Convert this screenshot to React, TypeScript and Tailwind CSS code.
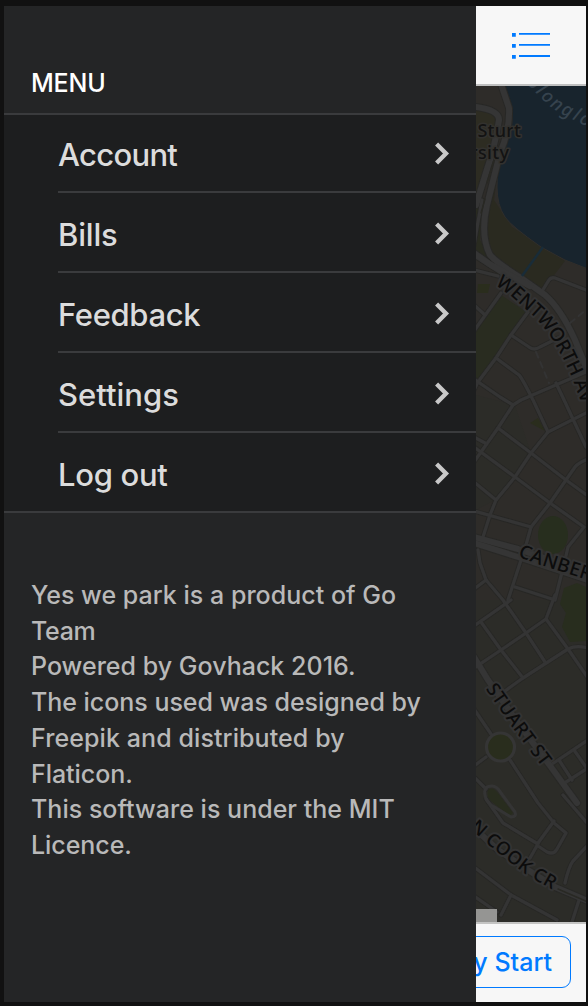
const menuItems = [
  { label: "Account", className: "h-[78px] tracking-[-0.7px]" },
  { label: "Bills", className: "h-[80px] tracking-[-0.2px]" },
  { label: "Feedback", className: "h-[80px] tracking-[-0.35px]" },
  { label: "Settings", className: "h-[80px] tracking-[0px]" },
  { label: "Log out", className: "h-[80px] tracking-[-0.3px]" },
];

const aboutLines = [
  { text: "Yes we park is a product of Go", className: "tracking-[0.02px]" },
  { text: "Team", className: "tracking-[-0.3px]" },
  { text: "Powered by Govhack 2016.", className: "tracking-[0.02px]" },
  { text: "The icons used was designed by", className: "tracking-[-0.03px]" },
  { text: "Freepik and distributed by", className: "tracking-[0.09px]" },
  { text: "Flaticon.", className: "tracking-[-0.05px]" },
  { text: "This software is under the MIT", className: "tracking-[0.02px]" },
  { text: "Licence.", className: "tracking-[-0.05px]" },
];

const minorRoads = [
  "M476 257L501 273", "M474 270L498 276", "M482 200L478 222L474 245",
  "M541 293L549 280Q551 277 555 278L586 290",
  "M528 312L511 335L496 358L478 382L474 390",
  "M501 293L474 331", "M474 305L485 315",
  "M511 335L529 347Q534 351 540 347L558 338",
  "M496 358L519 375Q522 378 533 400L548 432L586 413",
  "M474 379L500 397L513 405L521 400L586 372", "M556 383L565 402L586 447",
  "M548 432L531 453L515 477L496 500L490 515L483 537",
  "M513 405L498 428L481 452L474 462",
  "M498 428L531 453L566 480L588 496",
  "M474 447L515 477L550 503L584 527L568 547L565 560",
  "M474 437L485 443", "M474 482L496 500",
  "M588 459Q578 463 575 467L550 503L531 527L526 545",
  "M474 511L531 527",
  "M478 550L480 563L486 580L503 600L526 633L545 662",
  "M486 580L474 589", "M521 560L508 600", "M515 587L555 600L562 572",
  "M474 626L511 600", "M481 622L501 650L523 678",
  "M474 668L501 650L526 633L546 619L555 595",
  "M546 619L568 649L588 678", "M505 691L523 678L568 649Q576 645 588 648",
  "M474 709L491 734", "M486 757L474 766", "M510 760L538 803L554 823L566 833L557 849Q554 855 547 852L538 846",
  "M552 764L588 740", "M563 784L588 768", "M559 760L572 780", "M574 750L588 770",
  "M474 777L486 789", "M486 799L503 823L538 844L530 858",
  "M538 843L554 821", "M563 795L588 824",
  "M588 845L573 861Q569 866 565 883",
  "M474 867L511 895L557 920", "M511 895L501 915", "M474 896L497 912", "M579 900L572 922",
];

const majorRoads = [
  "M501 84L509 108Q510 130 500 153L487 205Q480 235 490 255Q497 263 521 278L545 295Q561 309 575 340L588 372",
  "M476 107Q499 110 499 120Q494 150 488 166L476 205",
  "M474 253L491 265L530 286",
  "M474 537L518 549L588 573",
  "M474 543L518 557L588 580",
  "M474 657L488 680L518 723L551 767L577 803",
  "M474 828L498 850L528 870L555 887L588 901",
];

function ListIcon() {
  return (
    <svg width="38" height="26" viewBox="0 0 38 26" fill="#007aff" className="block">
      <path d="M0 0h3.8v3.8H0zM0 11h3.8v3.8H0zM0 22h3.8v3.8H0z" />
      <path d="M7 0h31v1.8H7zM7 11h31v1.8H7zM7 22.1h31v1.8H7z" />
    </svg>
  );
}

function Chevron() {
  return (
    <svg width="16" height="24" viewBox="0 0 16 24" className="block">
      <path d="M2.6 3.1L12 12.5L2.6 21.9" fill="none" stroke="#c8c8c8" strokeWidth="4.3" />
    </svg>
  );
}

function MapLabel({ id, path, text, size, spacing }: {
  id: string;
  path: string;
  text: string;
  size: number;
  spacing: number;
}) {
  return (
    <>
      <path id={id} d={path} fill="none" />
      <text
        fontSize={size}
        letterSpacing={spacing}
        fontWeight="500"
        fill="#0c0c0c"
        stroke="#333333"
        strokeWidth="4"
        strokeLinejoin="round"
        paintOrder="stroke"
        dy={size * 0.36}
      >
        <textPath href={`#${id}`}>{text}</textPath>
      </text>
    </>
  );
}

function CityMap() {
  return (
    <svg
      width="110"
      height="836"
      viewBox="476 86 110 836"
      className="block overflow-hidden font-['Noto_Sans',sans-serif]"
    >
      <path d="M476 86h110v836H476z" fill="#2e2c29" />
      <path d="M476 395L515 405L531 453L495 500L476 510zM476 600H570L586 650V922H476z" fill="#2c2c28" />
      <path d="M476 110L497 115L490 170L476 205z" fill="#2d2c22" />
      <path d="M500 150L494 200L512 227L565 261L541 292L492 260L481 235L487 200z" fill="#2a2a20" />
      <path d="M476 205L482 200L480 240L500 272L476 255z" fill="#292b20" />
      <path d="M501 295L528 313L478 382H476V330z" fill="#292c20" />
      <path
        d="M503 84L511 105Q513 120 511 130L502 150Q497 165 497 187Q497 205 505 217Q511 226 541 247L565 260L588 269V84z"
        fill="#18242d"
        stroke="#302e2b"
        strokeWidth="1"
      />
      <path d="M530 423L538 418L545 431zM478 284L490 284L488 293H477z" fill="#2a2d1d" />
      <ellipse cx="553" cy="535" rx="15" ry="19" fill="#272e1e" />
      <path d="M560 604L564 588L577 583L588 588V641L570 642L562 627L566 613z" fill="#282d1e" />
      <path d="M488 790Q492 786 498 793L513 813L510 816L492 802Q486 797 488 790z" fill="#282c1e" />
      <g fill="none" strokeLinejoin="round" strokeLinecap="round">
        {minorRoads.map((d) => (
          <path key={d} d={d} stroke="#272725" strokeWidth="5" />
        ))}
        {majorRoads.map((d) => (
          <path key={d} d={d} stroke="#282826" strokeWidth="8" />
        ))}
        {minorRoads.map((d) => (
          <path key={d} d={d} stroke="#343434" strokeWidth="3.3" />
        ))}
        {majorRoads.map((d) => (
          <path key={d} d={d} stroke="#353535" strokeWidth="6" />
        ))}
        <path d="M485 795Q483 786 492 786Q497 786 501 793L515 812Q517 817 511 817L491 805Q486 801 485 795z" stroke="#343434" strokeWidth="3" />
        <path d="M536 352L549 383M570 323L586 310" stroke="#333" strokeWidth="2" strokeDasharray="6 5" />
        <path d="M558 889L588 902M494 160L487 183M485 199L481 213" stroke="#292924" strokeWidth="1.4" />
      </g>
      <path d="M543 247L522 276" stroke="#192c38" strokeWidth="2.5" />
      <circle cx="500.5" cy="747" r="14" fill="#292d1d" stroke="#353535" strokeWidth="3.2" />
      <path id="lake-name" d="M526 83L540 97Q552 110 568 117L602 134" fill="none" />
      <text fontSize="18.5" letterSpacing="2.2" fill="#36434e" fontStyle="italic" fontWeight="500">
        <textPath href="#lake-name">olonglo</textPath>
      </text>
      <g fontSize="18" fontWeight="500" fill="#131313" stroke="#32312e" strokeWidth="3" strokeLinejoin="round" paintOrder="stroke">
        <text x="477.5" y="137" textLength="43.5">Sturt</text>
        <text x="470" y="158.5" textLength="39">rsity</text>
      </g>
      <MapLabel id="wentworth" path="M499 279L518 293L538 311Q552 325 560 339L569 355L578 374L588 401L602 436" text="WENTWORTH AV" size={19} spacing={0.3} />
      <MapLabel id="canberra" path="M520 550L541 558L620 583" text="CANBER" size={19} spacing={0.3} />
      <MapLabel id="stuart" path="M491 685L518 724L561 781" text="STUART ST" size={18.5} spacing={0.35} />
      <MapLabel id="cook" path="M474 823L492 839L514 857L531 870L572 893" text="N COOK CR" size={18.5} spacing={0.3} />
      <path d="M476 909h21v13h-21z" fill="#959593" />
    </svg>
  );
}

export default function App() {
  return (
    <main className="flex h-[1006px] w-[588px] overflow-hidden bg-[#111111] pt-[6px] pr-[2px] pb-1 pl-1 font-['Inter',sans-serif] font-[450]">
      <aside className="w-[472px] shrink-0 bg-[#242526]">
        <header className="flex h-[109px] items-end border-b-2 border-[#3a3b3d] pb-[12px] pl-[27px]">
          <h1 className="text-[25px] leading-[36px] font-[450] tracking-[-0.2px] text-white">MENU</h1>
        </header>
        <nav className="border-b-2 border-[#3a3b3d] bg-[#1d1e1f] pl-[54px]">
          <ul className="-mb-[2px]">
            {menuItems.map((item) => (
              <li
                key={item.label}
                className={`flex items-end justify-between border-b-2 border-[#3a3b3d] pr-[26px] pb-[16px] ${item.className}`}
              >
                <span className="text-[31px] leading-[40px] text-[#dcdcdc]">{item.label}</span>
                <span className="pb-[10px]"><Chevron /></span>
              </li>
            ))}
          </ul>
        </nav>
        <section className="pt-[65px] pl-[27px] text-[25px] leading-[35.7px] text-[#b9b9b9]">
          {aboutLines.map((line) => (
            <p key={line.text} className={`whitespace-nowrap ${line.className}`}>{line.text}</p>
          ))}
        </section>
      </aside>
      <section className="flex w-[110px] shrink-0 flex-col overflow-hidden">
        <header className="flex h-[80px] shrink-0 items-start border-b-2 border-[#bfc0c0] bg-[#f7f7f7] pt-[27px] pl-[36px]">
          <ListIcon />
        </header>
        <CityMap />
        <footer className="flex h-[80px] shrink-0 items-start justify-end border-t-2 border-[#c4c4c3] bg-[#f7f7f7] pt-[12px] pr-[15px]">
          <button className="h-[52px] shrink-0 rounded-[9px] border border-[#007aff] pt-[2px] pr-[18px] pl-[60px] text-[25px] whitespace-nowrap text-[#007aff]">
            y Start
          </button>
        </footer>
      </section>
    </main>
  );
}
